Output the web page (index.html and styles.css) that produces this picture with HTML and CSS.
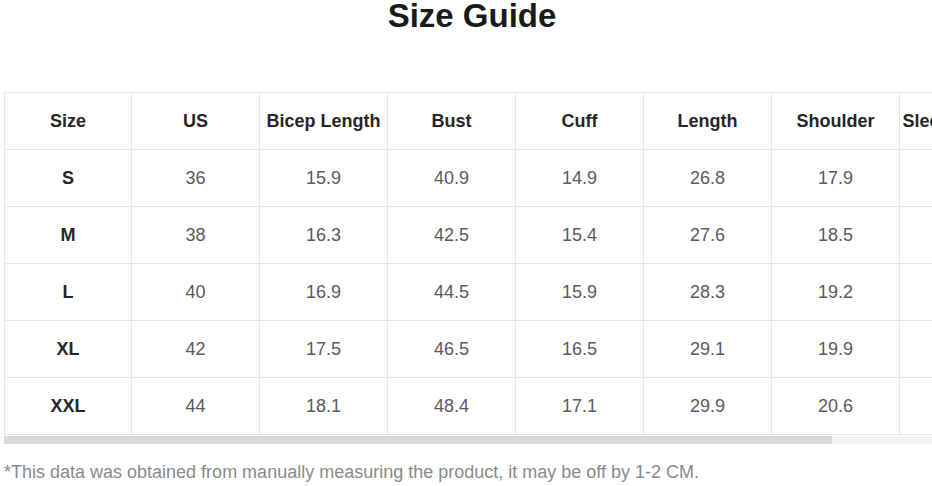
FILE: index.html
```html
<!DOCTYPE html>
<html>
<head>
<meta charset="utf-8">
<link rel="stylesheet" href="styles.css">
</head>
<body>
<div class="page">
  <h1 class="title">Size Guide</h1>
  <div class="scroller">
    <table class="guide">
      <thead>
        <tr><th>Size</th><th>US</th><th>Bicep Length</th><th>Bust</th><th>Cuff</th><th>Length</th><th>Shoulder</th><th>Sleeve Length</th></tr>
      </thead>
      <tbody>
        <tr><td class="sz">S</td><td>36</td><td>15.9</td><td>40.9</td><td>14.9</td><td>26.8</td><td>17.9</td><td>23.2</td></tr>
        <tr><td class="sz">M</td><td>38</td><td>16.3</td><td>42.5</td><td>15.4</td><td>27.6</td><td>18.5</td><td>23.6</td></tr>
        <tr><td class="sz">L</td><td>40</td><td>16.9</td><td>44.5</td><td>15.9</td><td>28.3</td><td>19.2</td><td>24.0</td></tr>
        <tr><td class="sz">XL</td><td>42</td><td>17.5</td><td>46.5</td><td>16.5</td><td>29.1</td><td>19.9</td><td>24.4</td></tr>
        <tr><td class="sz">XXL</td><td>44</td><td>18.1</td><td>48.4</td><td>17.1</td><td>29.9</td><td>20.6</td><td>24.8</td></tr>
      </tbody>
    </table>
  </div>
  <div class="scrollbar"><div class="thumb"></div></div>
  <p class="note">*This data was obtained from manually measuring the product, it may be off by 1-2 CM.</p>
</div>
</body>
</html>
```
FILE: styles.css
```css
html, body {
  margin: 0;
  padding: 0;
  background: #ffffff;
}
.page {
  width: 932px;
  padding-left: 4px;
  box-sizing: border-box;
  font-family: "Liberation Sans", Arial, sans-serif;
}
.title {
  margin: 0 0 56px 0;
  padding-left: 8px;
  text-align: center;
  font-size: 33px;
  line-height: 32px;
  font-weight: bold;
  color: #1a1a1a;
  height: 36px;
}
.scroller {
  width: 928px;
  overflow: hidden;
}
.guide {
  border-collapse: collapse;
  table-layout: fixed;
  width: 1024px;
}
.guide th,
.guide td {
  width: 128px;
  height: 57px;
  padding: 0;
  border: 1px solid #e6e6e6;
  text-align: center;
  font-size: 18px;
  white-space: nowrap;
  overflow: hidden;
  box-sizing: border-box;
}
.guide th:first-child,
.guide td:first-child {
  width: 127px;
}
.guide th {
  font-weight: bold;
  color: #262626;
}
.guide td {
  color: #5a5a5a;
}
.guide td.sz {
  font-weight: bold;
  color: #262626;
}
.scrollbar {
  width: 928px;
  height: 8px;
  margin-top: 1px;
  background: #f3f3f3;
}
.thumb {
  width: 828px;
  height: 8px;
  background: #d9d9d9;
}
.note {
  margin: 18px 0 0 0;
  font-size: 18px;
  line-height: 20px;
  color: #8a8a8a;
}
```
